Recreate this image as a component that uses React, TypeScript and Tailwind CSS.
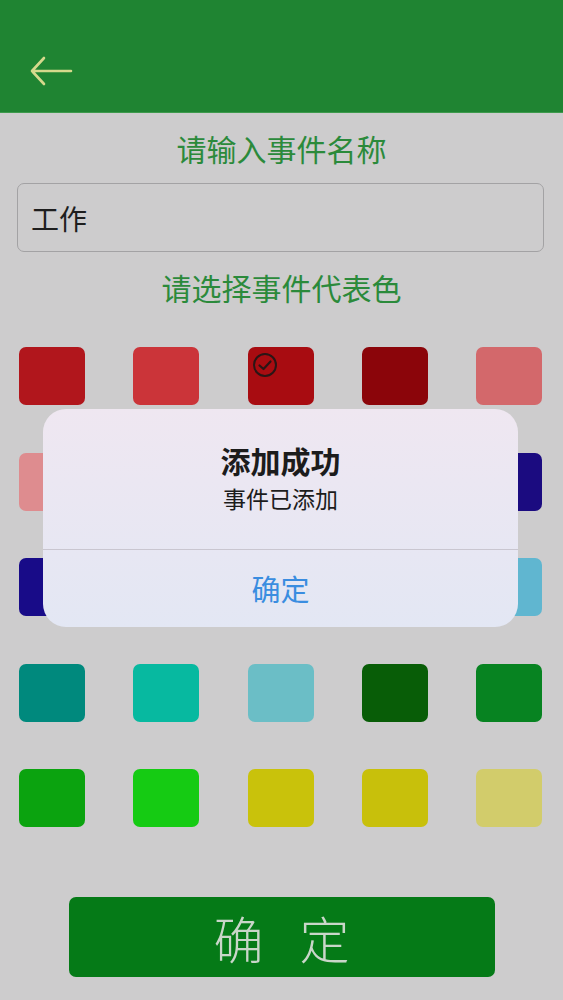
import React from 'react';

const cjk = "font-['Noto_Sans_CJK_SC','Noto_Sans',sans-serif]";

// palette rows (5 x 5), selected = index 2
const colors = [
  ['#b1161c', '#cb3439', '#a80c11', '#8b050a', '#d3686b'],
  ['#de8c8f', '#e4a3a6', '#6a1a95', '#2c168c', '#1b0b80'],
  ['#180b88', '#2638ae', '#2a6fcf', '#3d9bdf', '#60b6d0'],
  ['#00897d', '#07b9a0', '#6bbec6', '#085d07', '#078321'],
  ['#0ba30f', '#15cb13', '#c9c20b', '#c8c00b', '#d2cc6b'],
];

const CheckMark = () => (
  <svg width="26" height="26" viewBox="0 0 26 26" className="absolute left-[4px] top-[5px]">
    <circle cx="13" cy="13" r="11" fill="none" stroke="#2a1616" strokeWidth="2" />
    <path d="M7.5 13.5 L11.5 17 L18.5 9.5" fill="none" stroke="#2a1616" strokeWidth="2.2" strokeLinecap="round" strokeLinejoin="round" />
  </svg>
);

export default function App() {
  return (
    <div className={`relative w-[563px] h-[1000px] overflow-hidden bg-[#cdcccd] ${cjk}`}>
      {/* Nav bar */}
      <div className="h-[113px] bg-[#1f8432] border-b border-[#3d9a4c] flex items-end pb-[26px] pl-[29px]">
        <svg width="44" height="30" viewBox="0 0 44 30">
          <path d="M42 15 H3 M15 2 L3 15 L15 28" fill="none" stroke="#d5d98c" strokeWidth="2.6" strokeLinecap="round" strokeLinejoin="round" />
        </svg>
      </div>

      <div className="mt-[20px] h-[30px] leading-[30px] text-center text-[30px] text-[#2b8a3b]">
        请输入事件名称
      </div>

      <div className="mt-[20px] ml-[17px] w-[527px] h-[69px] rounded-[7px] border border-[#a3a2a4] flex items-center px-[13px] text-[28px] text-[#1e1e1e]">
        工作
      </div>

      <div className="mt-[20px] h-[30px] leading-[30px] text-center text-[30px] text-[#2b8a3b]">
        请选择事件代表色
      </div>

      {/* Colour grid */}
      <div className="mt-[45px] pl-[19px] pr-[21px] flex flex-col gap-[47.5px]">
        {colors.map((row, r) => (
          <div key={r} className="flex justify-between">
            {row.map((c, i) => (
              <div key={i} className="relative w-[66px] h-[58px] rounded-[7px]" style={{ backgroundColor: c }}>
                {r === 0 && i === 2 && <CheckMark />}
              </div>
            ))}
          </div>
        ))}
      </div>

      {/* Bottom confirm button */}
      <div className="mt-[70px] mx-auto w-[426px] h-[80px] rounded-[7px] bg-[#057a17] flex items-center justify-center">
        <span className="text-[50px] font-light text-[#c9d6c9] [word-spacing:25px] leading-none">确 定</span>
      </div>

      {/* Alert dialog */}
      <div className="absolute left-[43px] top-[409px] w-[475px] rounded-[23px] overflow-hidden bg-gradient-to-b from-[#efe7f1] to-[#e3e7f4]">
        <div className="pt-[33px] pb-[35px] text-center">
          <div className="h-[36px] leading-[36px] text-[30px] font-bold text-[#1c1c1c]">添加成功</div>
          <div className="mt-[5px] h-[31px] leading-[31px] text-[23px] text-[#1c1c1c]">事件已添加</div>
        </div>
        <div className="h-px bg-[#c9c6d0]" />
        <div className="h-[77px] flex items-center justify-center text-[29px] text-[#3a8de0]">确定</div>
      </div>
    </div>
  );
}
